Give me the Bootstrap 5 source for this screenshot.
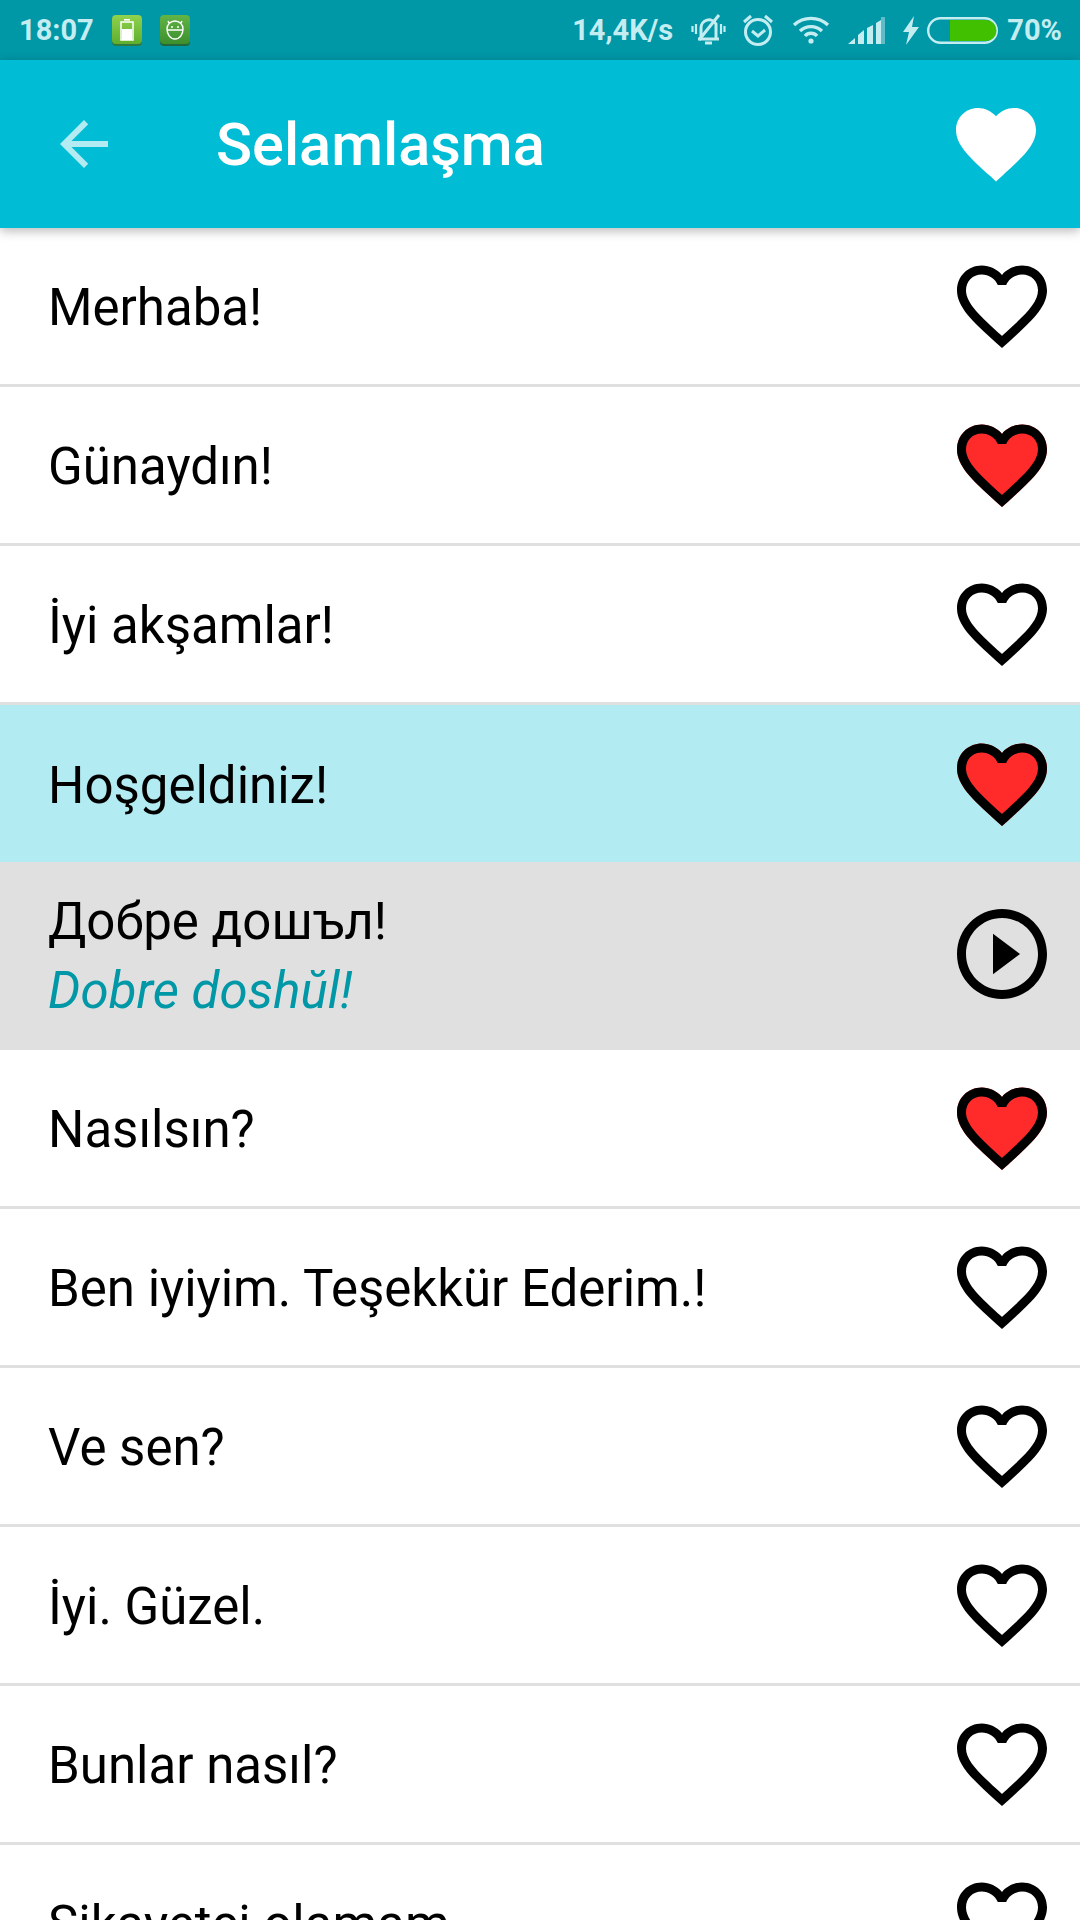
<!doctype html>
<html lang="tr">
<head>
<meta charset="utf-8">
<title>Selamlaşma</title>
<link href="https://cdn.jsdelivr.net/npm/bootstrap@5.3.0/dist/css/bootstrap.min.css" rel="stylesheet">
<style>
html,body{height:1920px;overflow:hidden;background:#fff;font-family:Roboto,"Liberation Sans",sans-serif;color:#000}
.sbar{height:60px;background:#0097a7;color:#c4edf2;font-size:29px;font-weight:700;line-height:1;padding:0 18px 0 19px}
.sbar svg{display:block;flex:none}
.s-time{width:93px}
.s-app{margin-right:18px}
.s-speed{margin-right:18px}
.s-bell{margin-right:16px}
.s-alarm{margin-right:18px}
.s-wifi{margin-right:18px}
.s-sig{margin-right:18px}
.s-bolt{margin-right:8px}
.s-batt{margin-right:9px}
.abar{height:168px;background:#00bcd4;box-shadow:0 3px 10px rgba(0,0,0,.28);position:relative;z-index:2;padding:0 36px 0 48px}
.abar-back{width:72px;height:72px;flex:none;fill:#b2ebf2}
.abar-title{margin:4px 0 0 96px;font-size:59.500px;font-weight:500;color:#fff;line-height:1;flex:1 1 auto}
.abar-heart{width:96px;height:96px;flex:none;fill:#fff}
.phr{--bs-list-group-border-width:0;--bs-list-group-bg:#fff;--bs-list-group-color:#000;border-radius:0}
.phr .list-group-item{height:159px;padding:0 24px 0 48px;border-bottom:3px solid #e0e0e0;font-size:51px;line-height:1;border-radius:0}
.phr .list-group-item.is-sel{background:#b2ebf2;border-bottom:0;height:157px}
.phr .list-group-item.is-open{background:#e0e0e0;border-bottom:0;height:188px}
.p-text{margin-top:3px}
.is-open .p-text{margin-top:-1px}
.p-main{display:block}
.p-trans{display:block;font-style:italic;color:#0097a7;margin-top:18px}
.ico{width:108px;height:108px;flex:none}
.ico-play{margin-bottom:5px}
</style>
</head>
<body>
<div class="sbar d-flex align-items-center">
  <span class="s-time">18:07</span>
  <svg class="s-app" width="30" height="31" viewBox="0 0 30 31"><defs><linearGradient id="g1" x1="0" y1="0" x2="0" y2="1"><stop offset="0" stop-color="#8fd24e"/><stop offset="1" stop-color="#5fae2e"/></linearGradient><linearGradient id="g2" x1="0" y1="0" x2="0" y2="1"><stop offset="0" stop-color="#62b446"/><stop offset="1" stop-color="#3c8f2d"/></linearGradient></defs><rect y="1" width="30" height="30" rx="4" fill="#2f7a40"/><rect width="30" height="29" rx="4" fill="url(#g1)"/><rect x="9" y="7" width="12" height="18" fill="none" stroke="#fff" stroke-width="1.500"/><rect x="12" y="4" width="6" height="1.600" fill="#fff"/><rect x="10" y="14" width="10" height="11" fill="#fff"/></svg>
  <svg class="s-app" width="30" height="31" viewBox="0 0 30 31"><rect y="1" width="30" height="30" rx="4" fill="#24683a"/><rect width="30" height="29" rx="4" fill="url(#g2)"/><path d="M7 14a8 8 0 0 1 16 0c0 5-3 10-8 10s-8-5-8-10zM7 15h16M9 8 8 6M21 8l1-2" fill="none" stroke="#fff" stroke-width="1.400"/><circle cx="12" cy="12" r="1" fill="#fff"/><circle cx="18" cy="12" r="1" fill="#fff"/></svg>
  <span class="ms-auto s-speed">14,4K/s</span>
  <svg class="s-bell" width="35" height="34" viewBox="0 0 35 34" fill="none" stroke="#c4edf2" stroke-width="3"><path d="M10 25V15a8 8 0 0 1 15-4v14M7 26h21M14 30h7"/><path d="M28 2 8 27"/><path d="M5 11v10M1.500 13v6M30 11v10M33.500 13v6" stroke-width="2.200"/></svg>
  <svg class="s-alarm" width="32" height="34" viewBox="0 0 32 34" fill="none" stroke="#c4edf2" stroke-width="3"><circle cx="16" cy="19" r="12.500"/><path d="M10 18l6 5 7-6M2 9l7-6M30 9l-7-6"/></svg>
  <svg class="s-wifi" width="38" height="28" viewBox="0 0 38 28" fill="none" stroke="#c4edf2" stroke-width="3.400"><path d="M2 9a25 25 0 0 1 34 0M8 15a16 16 0 0 1 22 0M13 20a8 8 0 0 1 12 0"/><circle cx="19" cy="25" r="2.600" fill="#c4edf2" stroke="none"/></svg>
  <svg class="s-sig" width="37" height="27" viewBox="0 0 37 27"><path d="M0 27 7 21v6zM10 18l6-5v14h-6zM19 11l6-3v19h-6zM28 6l5-3v24h-5z" fill="#c4edf2"/><rect x="33" y="0" width="4" height="27" fill="#5fbcc8"/></svg>
  <svg class="s-bolt" width="16" height="29" viewBox="0 0 16 29"><path d="M11 0 0 16h6L3 29 16 11H9z" fill="#c4edf2"/></svg>
  <svg class="s-batt" width="71" height="27" viewBox="0 0 71 27"><rect x="1.200" y="1.200" width="68.600" height="24.600" rx="12.300" fill="none" stroke="#c4edf2" stroke-width="2.400"/><path d="M23 3h36a10.500 10.500 0 0 1 0 21H23z" fill="#41c000"/></svg>
  <span>70%</span>
</div>
<header class="abar d-flex align-items-center">
  <svg class="abar-back" viewBox="0 0 24 24"><path d="M20 11H7.830l5.590-5.590L12 4l-8 8 8 8 1.410-1.410L7.830 13H20v-2z"/></svg>
  <h1 class="abar-title">Selamlaşma</h1>
  <svg class="abar-heart" viewBox="0 0 24 24"><path d="M12 21.350l-1.450-1.320C5.400 15.360 2 12.280 2 8.500 2 5.420 4.420 3 7.500 3c1.740 0 3.410.81 4.500 2.090C13.090 3.810 14.760 3 16.500 3 19.580 3 22 5.420 22 8.500c0 3.780-3.400 6.860-8.550 11.540L12 21.350z"/></svg>
</header>
<svg class="d-none"><defs>
  <symbol id="h-line" viewBox="0 0 24 24"><path d="M16.500 3c-1.740 0-3.410.81-4.500 2.090C10.910 3.810 9.240 3 7.500 3 4.420 3 2 5.420 2 8.500c0 3.780 3.400 6.860 8.550 11.540L12 21.350l1.450-1.320C18.600 15.360 22 12.280 22 8.500 22 5.420 19.580 3 16.500 3zm-4.400 15.550l-.1.100-.1-.1C7.140 14.240 4 11.390 4 8.500 4 6.500 5.500 5 7.500 5c1.540 0 3.040.99 3.570 2.360h1.870C13.460 5.990 14.960 5 16.500 5c2 0 3.500 1.500 3.500 3.500 0 2.890-3.140 5.740-7.900 10.050z"/></symbol>
  <symbol id="h-red" viewBox="0 0 24 24"><path d="M12 21.350l-1.450-1.320C5.400 15.360 2 12.280 2 8.500 2 5.420 4.420 3 7.500 3c1.740 0 3.410.81 4.500 2.090C13.090 3.810 14.760 3 16.500 3 19.580 3 22 5.420 22 8.500c0 3.780-3.400 6.860-8.550 11.540L12 21.350z" fill="#ff2a2a"/><path d="M16.500 3c-1.740 0-3.410.81-4.500 2.090C10.910 3.810 9.240 3 7.500 3 4.420 3 2 5.420 2 8.500c0 3.780 3.400 6.860 8.550 11.540L12 21.350l1.450-1.320C18.600 15.360 22 12.280 22 8.500 22 5.420 19.580 3 16.500 3zm-4.400 15.550l-.1.100-.1-.1C7.140 14.240 4 11.390 4 8.500 4 6.500 5.500 5 7.500 5c1.540 0 3.040.99 3.570 2.360h1.870C13.460 5.990 14.960 5 16.500 5c2 0 3.500 1.500 3.500 3.500 0 2.890-3.140 5.740-7.900 10.050z"/></symbol>
</defs></svg>
<div class="list-group phr">
  <div class="list-group-item d-flex align-items-center justify-content-between"><span class="p-text">Merhaba!</span><svg class="ico"><use href="#h-line"/></svg></div>
  <div class="list-group-item d-flex align-items-center justify-content-between"><span class="p-text">Günaydın!</span><svg class="ico"><use href="#h-red"/></svg></div>
  <div class="list-group-item d-flex align-items-center justify-content-between"><span class="p-text">İyi akşamlar!</span><svg class="ico"><use href="#h-line"/></svg></div>
  <div class="list-group-item is-sel d-flex align-items-center justify-content-between"><span class="p-text">Hoşgeldiniz!</span><svg class="ico"><use href="#h-red"/></svg></div>
  <div class="list-group-item is-open d-flex align-items-center justify-content-between"><span class="p-text"><span class="p-main">Добре дошъл!</span><span class="p-trans">Dobre doshŭl!</span></span><svg class="ico ico-play" viewBox="0 0 24 24"><path d="M10 16.500l6-4.500-6-4.500v9zM12 2C6.480 2 2 6.480 2 12s4.480 10 10 10 10-4.480 10-10S17.520 2 12 2zm0 18c-4.410 0-8-3.590-8-8s3.590-8 8-8 8 3.590 8 8-3.590 8-8 8z"/></svg></div>
  <div class="list-group-item d-flex align-items-center justify-content-between"><span class="p-text">Nasılsın?</span><svg class="ico"><use href="#h-red"/></svg></div>
  <div class="list-group-item d-flex align-items-center justify-content-between"><span class="p-text">Ben iyiyim. Teşekkür Ederim.!</span><svg class="ico"><use href="#h-line"/></svg></div>
  <div class="list-group-item d-flex align-items-center justify-content-between"><span class="p-text">Ve sen?</span><svg class="ico"><use href="#h-line"/></svg></div>
  <div class="list-group-item d-flex align-items-center justify-content-between"><span class="p-text">İyi. Güzel.</span><svg class="ico"><use href="#h-line"/></svg></div>
  <div class="list-group-item d-flex align-items-center justify-content-between"><span class="p-text">Bunlar nasıl?</span><svg class="ico"><use href="#h-line"/></svg></div>
  <div class="list-group-item d-flex align-items-center justify-content-between"><span class="p-text">Şikayetçi olamam.</span><svg class="ico"><use href="#h-line"/></svg></div>
</div>
<script src="https://cdn.jsdelivr.net/npm/bootstrap@5.3.0/dist/js/bootstrap.bundle.min.js"></script>
</body>
</html>
